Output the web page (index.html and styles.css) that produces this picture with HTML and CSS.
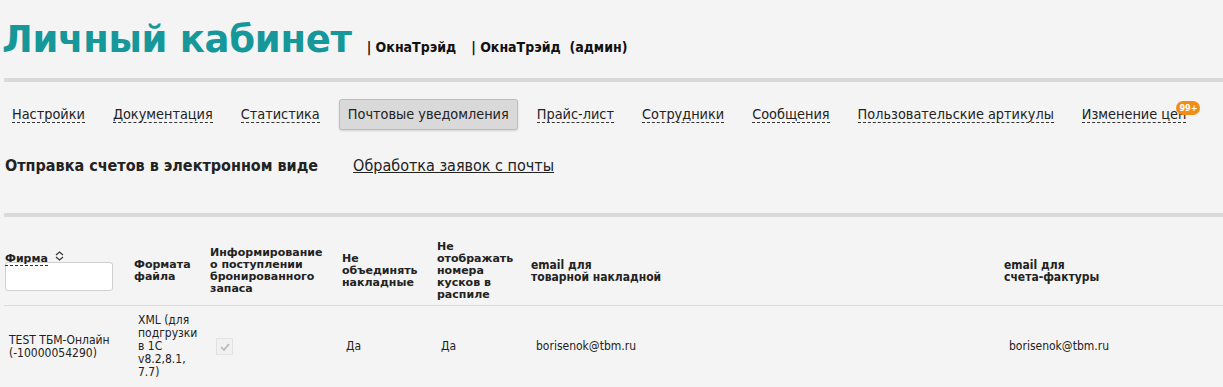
FILE: index.html
```html
<!DOCTYPE html>
<html>
<head>
    <title>Личный кабинет</title>
    <link rel="stylesheet" href="styles.css">
</head>
<body>

<header class="top">
    <h1 class="title">Личный кабинет</h1>
    <span class="org">| ОкнаТрэйд</span>
    <span class="org">| ОкнаТрэйд &nbsp;(админ)</span>
</header>
<div class="rule"></div>

<nav class="menu">
    <a class="menu-item"><span>Настройки</span></a>
    <a class="menu-item"><span>Документация</span></a>
    <a class="menu-item"><span>Статистика</span></a>
    <a class="menu-item active"><span>Почтовые уведомления</span></a>
    <a class="menu-item"><span>Прайс-лист</span></a>
    <a class="menu-item"><span>Сотрудники</span></a>
    <a class="menu-item"><span>Сообщения</span></a>
    <a class="menu-item"><span>Пользовательские артикулы</span></a>
    <a class="menu-item"><span>Изменение цен</span><i class="badge">99+</i></a>
</nav>

<div class="subtabs">
    <span class="subtab current">Отправка счетов в электронном виде</span>
    <a class="subtab">Обработка заявок с почты</a>
</div>
<div class="rule rule-low"></div>

<table class="grid">
    <colgroup>
        <col style="width:129px">
        <col style="width:76px">
        <col style="width:132px">
        <col style="width:95px">
        <col style="width:94px">
        <col style="width:473px">
        <col>
    </colgroup>
    <thead>
        <tr>
            <th>
                <span class="sort">Фирма</span>
                <svg class="sort-icon" width="9" height="10" viewBox="0 0 9 10"><path d="M1 4 L4.5 1 L8 4 M1 6 L4.5 9 L8 6" fill="none" stroke="#333" stroke-width="1.2"/></svg>
                <input class="filter" type="text">
            </th>
            <th>Формата<br>файла</th>
            <th>Информирование<br>о поступлении<br>бронированного<br>запаса</th>
            <th>Не<br>объединять<br>накладные</th>
            <th>Не<br>отображать<br>номера<br>кусков в<br>распиле</th>
            <th class="narrow">email для<br>товарной накладной</th>
            <th class="narrow">email для<br>счета-фактуры</th>
        </tr>
    </thead>
    <tbody>
        <tr>
            <td>TEST ТБМ-Онлайн<br>(-10000054290)</td>
            <td>XML (для<br>подгрузки<br>в 1С<br>v8.2,8.1,<br>7.7)</td>
            <td><span class="check"><svg width="10" height="8" viewBox="0 0 10 8"><path d="M1 4 L4 7 L9 1" fill="none" stroke="#b5b5b5" stroke-width="1.6"/></svg></span></td>
            <td>Да</td>
            <td>Да</td>
            <td class="mail">borisenok@tbm.ru</td>
            <td class="mail">borisenok@tbm.ru</td>
        </tr>
    </tbody>
</table>

</body>
</html>
```

FILE: styles.css
```css
body {
    margin: 0;
    padding: 0 0 0 4px;
    background-color: #f4f4f4;
    color: #222;
    font-family: 'DejaVu Sans Condensed', 'Liberation Sans Narrow', 'DejaVu Sans', sans-serif;
    overflow: hidden;
}
.top {
    display: flex;
    align-items: baseline;
    padding-top: 20px;
    height: 60px;
    box-sizing: border-box;
}
.title {
    margin: 0 15px 0 -2px;
    font-family: 'DejaVu Sans', sans-serif;
    font-size: 37px;
    line-height: 40px;
    font-weight: bold;
    color: #16989b;
    letter-spacing: -0.3px;
}
.org {
    font-size: 14px;
    font-weight: bold;
    color: #111;
    margin-right: 15px;
}
.rule {
    height: 4px;
    background-color: #dadada;
    margin-top: 18px;
}
.menu {
    display: flex;
    align-items: center;
    margin-top: 17px;
    margin-left: -1px;
    height: 31px;
}
.menu-item {
    position: relative;
    display: block;
    padding: 0 8px;
    margin-right: 10px;
    font-size: 14.35px;
    line-height: 29px;
    color: #222;
    border: 1px solid transparent;
    border-radius: 3px;
}
.menu-item span {
    border-bottom: 1px dashed #333;
}
.menu-item.active {
    background-color: #d9d9d9;
    border-color: #bdbdbd;
    box-shadow: 0 1px 2px rgba(0, 0, 0, 0.15);
}
.menu-item.active span {
    border-bottom: none;
}
.badge {
    position: absolute;
    top: 1px;
    right: -6px;
    background-color: #f28c18;
    color: #fff;
    font-style: normal;
    font-weight: bold;
    font-size: 9px;
    line-height: 14px;
    padding: 0 3px;
    border-radius: 7px;
}
.subtabs {
    display: flex;
    align-items: center;
    height: 30px;
    margin-top: 20px;
}
.subtab {
    font-size: 16px;
    color: #222;
    margin-right: 35px;
}
.subtab.current {
    font-weight: bold;
    margin-left: 1px;
}
a.subtab {
    text-decoration: underline;
}
.rule-low {
    margin-top: 33px;
}
.grid {
    width: 1219px;
    table-layout: fixed;
    border-collapse: collapse;
    margin-top: 18px;
}
.grid th {
    text-align: left;
    vertical-align: middle;
    font-family: 'DejaVu Sans', sans-serif;
    font-size: 11px;
    line-height: 12px;
    font-weight: bold;
    color: #222;
    padding: 6px 1px 4px;
    height: 60px;
    border-bottom: 1px solid #dcdcdc;
}
.grid th.narrow {
    font-family: 'DejaVu Sans Condensed', 'Liberation Sans Narrow', sans-serif;
    font-size: 12px;
}
.sort {
    position: relative;
    z-index: 1;
    border-bottom: 1px dashed #333;
}
.sort-icon {
    margin-left: 3px;
    vertical-align: 1px;
}
.filter {
    display: block;
    width: 108px;
    height: 29px;
    box-sizing: border-box;
    margin: -3px 0 0;
    border: 1px solid #cfcfcf;
    border-radius: 3px;
    background-color: #fff;
}
.grid td {
    vertical-align: middle;
    font-size: 12px;
    line-height: 13px;
    color: #222;
    padding: 8px 5px;
    border-bottom: 1px solid #dcdcdc;
}
.grid td.mail {
    padding-left: 6px;
}
.check {
    display: inline-flex;
    align-items: center;
    justify-content: center;
    width: 17px;
    height: 17px;
    margin-left: 2px;
    border: 1px solid #e2e2e2;
    background-color: #f1f1f1;
    box-sizing: border-box;
}
```
